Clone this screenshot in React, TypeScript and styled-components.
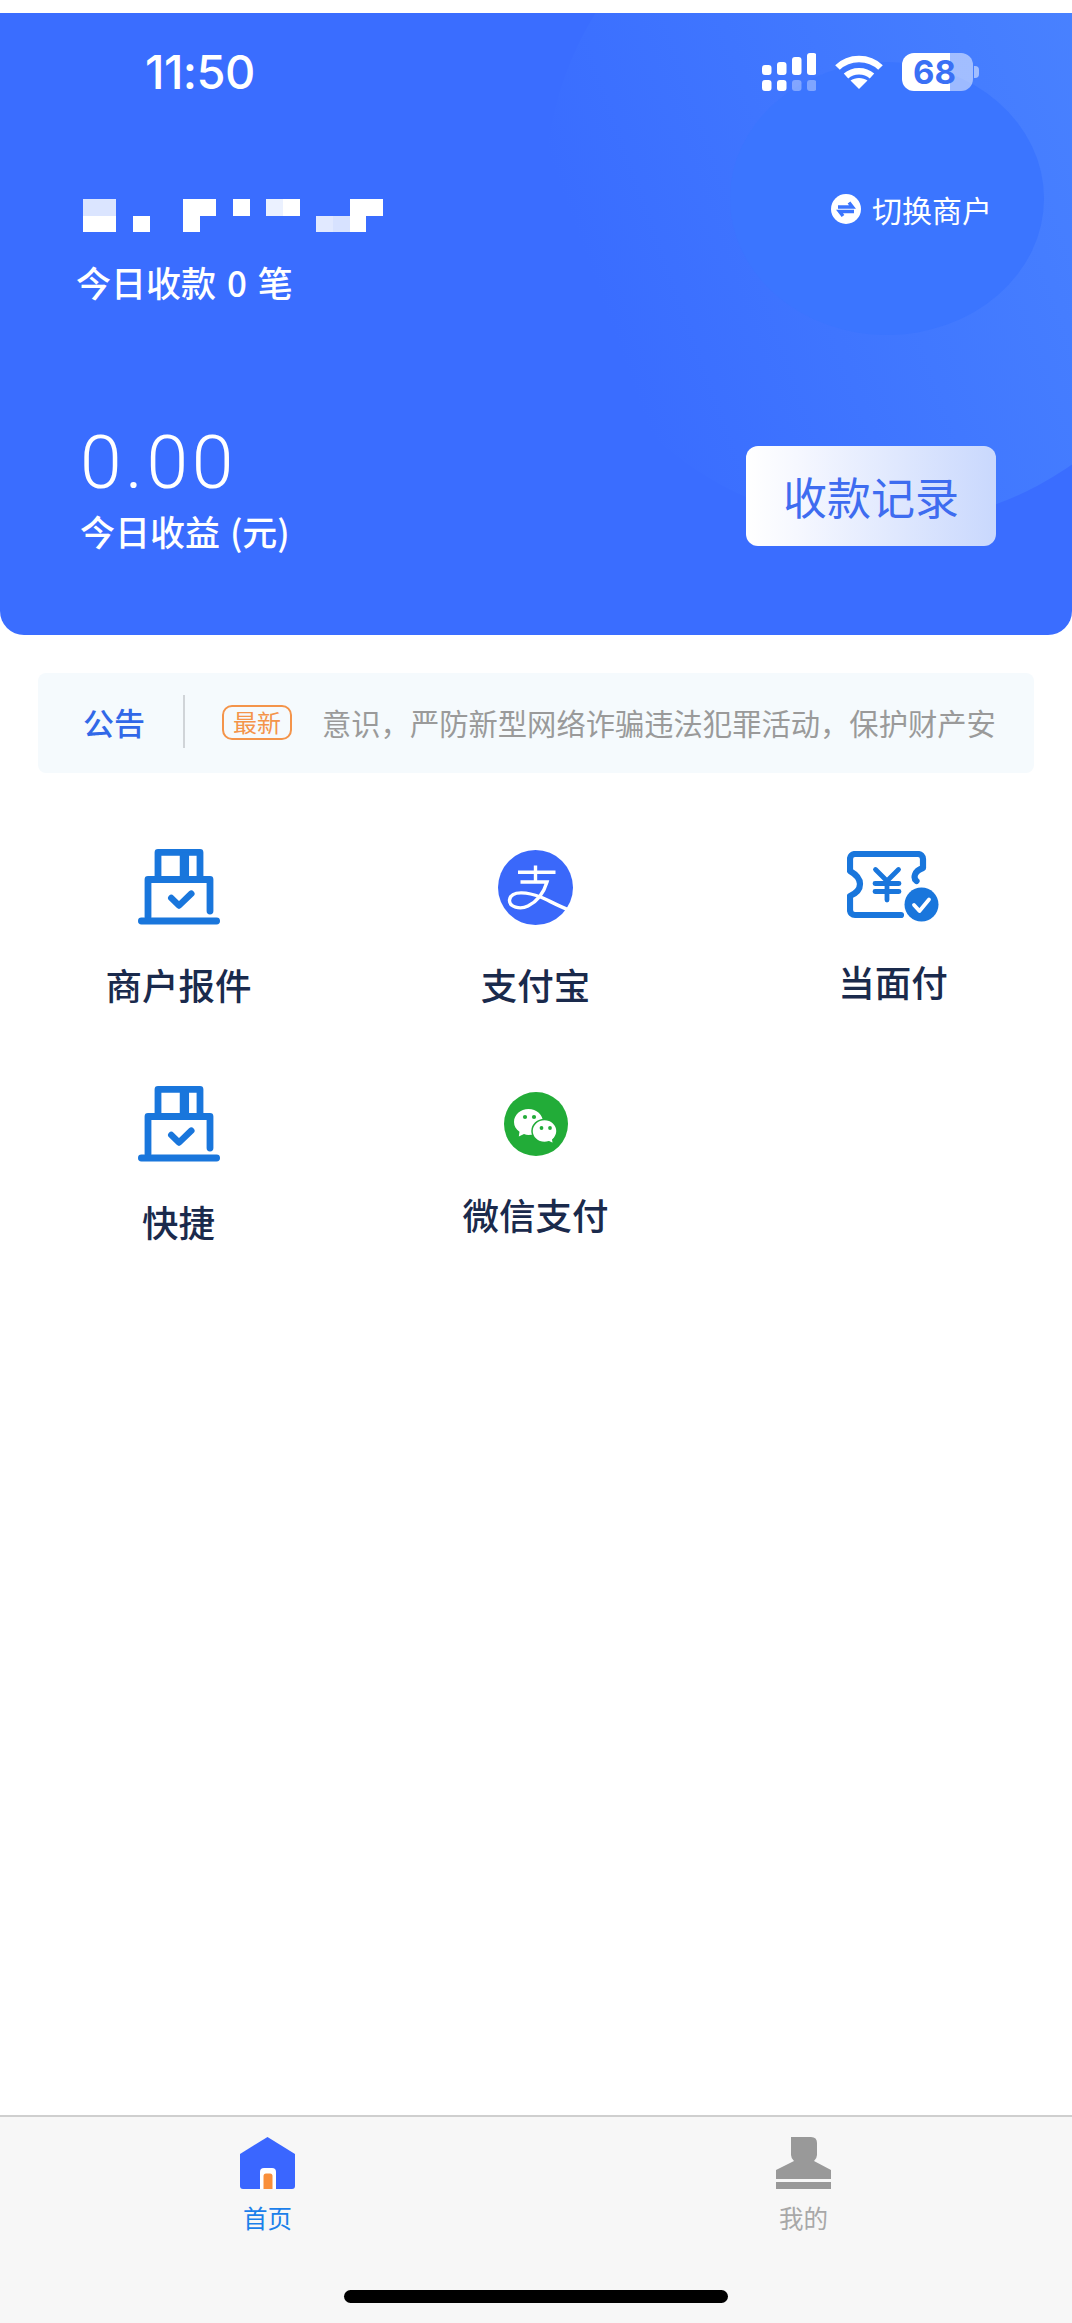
import React from 'react';
import styled, { createGlobalStyle } from 'styled-components';

const Global = createGlobalStyle`
  html, body { margin: 0; padding: 0; background: #fff; }
  * { box-sizing: border-box; }
  body { font-family: "Liberation Sans", "Noto Sans CJK SC", sans-serif; }
`;

const Page = styled.div`
  width: 1072px; height: 100vh; padding-top: 13px; display: flex; flex-direction: column; overflow: hidden; background: #fff;
`;
const Hero = styled.header`
  position: relative; height: 622px; flex: none; overflow: hidden;
  background: #3a6dff; border-radius: 0 0 24px 24px; color: #fff;
  display: flex; flex-direction: column;
`;
const GlowLarge = styled.div`
  position: absolute; left: 545px; top: -158px; width: 670px; height: 670px; border-radius: 50%;
  background: linear-gradient(70deg, rgba(70,128,255,0) 15%, rgba(70,128,255,.6) 50%, #4a83ff 85%);
`;
const GlowSmall = styled.div`
  position: absolute; left: 730px; top: 49px; width: 314px; height: 273px; border-radius: 50%;
  background: #3b75ff;
`;
const StatusBar = styled.div`
  position: relative; display: flex; justify-content: space-between; align-items: center;
  height: 38px; margin-top: 40px; padding: 0 99px 0 145px;
`;
const Time = styled.span`
  font: 500 47px/38px "Inter", "Liberation Sans", sans-serif; letter-spacing: -.6px;
`;
const StatusIcons = styled.div`
  display: flex; align-items: center; gap: 19px;
`;
const Battery = styled.div`
  position: relative; width: 71px; height: 38px; border-radius: 12px;
  background: linear-gradient(90deg, #fff 0 48px, rgba(255,255,255,.5) 48px);
  display: flex; align-items: center; justify-content: center;
  font: 700 33px/38px "Inter", sans-serif; color: #3a70f5; padding-right: 6px;
  &::after {
    content: ""; position: absolute; left: 72px; top: 13px; width: 5px; height: 12px;
    border-radius: 0 4px 4px 0; background: rgba(255,255,255,.5);
  }
`;
const MerchantRow = styled.div`
  position: relative; display: flex; justify-content: space-between; align-items: flex-start;
  margin-top: 108px; padding: 0 80px 0 76px;
`;
const MerchantInfo = styled.div`
  display: flex; flex-direction: column; align-items: flex-start;
`;
const Mosaic = styled.svg`
  display: block; margin-left: 7px;
`;
const TodayCount = styled.div`
  margin-top: 30px; font: 500 35px/40px "Noto Sans CJK SC", sans-serif; word-spacing: 3px;
`;
const SwitchBtn = styled.div`
  display: flex; align-items: center; gap: 11px; margin-top: -12px;
  font: 400 30px/44px "Noto Sans CJK SC", sans-serif;
`;
const RevenueRow = styled.div`
  position: relative; display: flex; justify-content: space-between; align-items: flex-start;
  margin-top: 118px; padding: 0 76px 0 80px;
`;
const RevenueInfo = styled.div`
  display: flex; flex-direction: column;
`;
const Amount = styled.div`
  font: 300 75px/84px "Roboto", "Liberation Sans", sans-serif; letter-spacing: 3.500px;
`;
const AmountLabel = styled.div`
  margin-top: 6px; font: 500 35px/42px "Noto Sans CJK SC", sans-serif; word-spacing: 2px;
`;
const RecordBtn = styled.div`
  width: 250px; height: 100px; margin-top: 26px; border-radius: 12px;
  background: linear-gradient(90deg, #fff 0%, #f6f8ff 20%, #c9d8fd 100%);
  display: flex; align-items: center; justify-content: center;
  font: 400 44px/50px "Noto Sans CJK SC", sans-serif; color: #3e6cf0;
`;
const Main = styled.main`
  flex: 1; display: flex; flex-direction: column; padding: 38px 38px 0;
`;
const Notice = styled.section`
  height: 100px; border-radius: 8px; background: #f5fafd; display: flex; align-items: center; overflow: hidden;
  padding-left: 45px;
`;
const NoticeTitle = styled.div`
  font: 500 31px/40px "Noto Sans CJK SC", sans-serif; color: #3168e8; width: 62px; flex: none; white-space: nowrap; margin-top: -3px;
`;
const NoticeDivider = styled.div`
  width: 2px; height: 53px; background: #d0d4d8; margin: -3px 38px 0; flex: none;
`;
const NoticeTag = styled.div`
  width: 70px; height: 35px; flex: none; border: 2px solid #f4944a; border-radius: 10px;
  display: flex; align-items: center; justify-content: center;
  font: 400 24px/30px "Noto Sans CJK SC", sans-serif; color: #f4944a; margin-top: -2px; margin-left: -1px;
`;
const NoticeText = styled.div`
  margin-left: 30px; flex: none; white-space: nowrap; margin-top: -2px;
  font: 400 29.300px/40px "Noto Sans CJK SC", sans-serif; color: #9a9a9a;
`;
const Grid = styled.nav`
  display: grid; grid-template-columns: 357px 357px 358px; margin: 76px -38px 0;
  grid-auto-rows: 237px;
`;
const Cell = styled.div`
  display: flex; flex-direction: column; align-items: center;
`;
const IconBox = styled.div`
  height: 76px; display: flex; align-items: center; justify-content: center; flex: none;
  svg { display: block; }
`;
const CellLabel = styled.div<{ $gap: number }>`
  margin-top: ${p => p.$gap}px; font: 500 36.500px/42px "Noto Sans CJK SC", sans-serif; color: #1a2a4c; white-space: nowrap;
`;
const TabBar = styled.footer`
  flex: none; height: 208px; border-top: 2px solid #cfcfcf; background: #f7f7f7; position: relative;
  display: grid; grid-template-columns: 535px 537px;
`;
const Tab = styled.div`
  display: flex; flex-direction: column; align-items: center; padding-top: 20px;
`;
const TabLabel = styled.div<{ $active?: boolean }>`
  margin-top: 13px; font: 400 24.500px/32px "Noto Sans CJK SC", sans-serif; color: ${p => p.$active ? '#1b80ea' : '#a8a8a8'};
`;
const HomeBar = styled.div`
  position: absolute; left: 344px; top: 173px; width: 384px; height: 13px; border-radius: 7px; background: #000;
`;

const SignalIcon = () => (
  <svg width="54" height="38" viewBox="0 0 54 38" fill="#fff">
    <rect x="0" y="12" width="9.500" height="10" rx="3" />
    <rect x="15" y="9" width="9.500" height="13" rx="3" />
    <rect x="30" y="4" width="9.500" height="18" rx="3" />
    <rect x="45" y="0" width="9.500" height="22" rx="3" />
    <rect x="0" y="27" width="9.500" height="11" rx="3" />
    <rect x="15" y="27" width="9.500" height="11" rx="3" />
    <rect x="30" y="27" width="9.500" height="11" rx="3" opacity=".35" />
    <rect x="45" y="27" width="9.500" height="11" rx="3" opacity=".35" />
  </svg>
);
const WifiIcon = () => (
  <svg width="48" height="34" viewBox="0 0 48 34" fill="none" stroke="#fff" strokeWidth="6.500">
    <path d="M2.500 12.500C14 1 34 1 45.500 12.500" />
    <path d="M11 21C18 14.500 30 14.500 37 21" />
    <path d="M24 34L15.500 25.500C20 22 28 22 32.500 25.500Z" fill="#fff" stroke="none" />
  </svg>
);
const SwitchIcon = () => (
  <svg width="30" height="30" viewBox="0 0 30 30">
    <circle cx="15" cy="15" r="15" fill="#fff" />
    <path d="M7 13H21.500L18 8.500M23 17.500H8.500L12 22" fill="none" stroke="#3b75ff" strokeWidth="3.400" />
  </svg>
);
const StoreIcon = () => (
  <svg width="82" height="76" viewBox="0 0 82 76" fill="none" stroke="#1976dc" strokeWidth="6.800" strokeLinecap="round" strokeLinejoin="round">
    <path d="M20 27V3.400H62V27" />
    <path d="M46.400 3.400V27" strokeWidth="9.300" strokeLinecap="butt" />
    <path d="M10 68V30.500H72V62" />
    <path d="M3.400 72H78.600" />
    <path d="M33.300 49L41 56.500L53.300 44.700" strokeWidth="6.500" />
  </svg>
);
const AlipayIcon = () => (
  <svg width="75" height="75" viewBox="0 0 75 75">
    <circle cx="37.500" cy="37.500" r="37.500" fill="#3a68fa" />
    <path d="M72 60.500C58 55 50 50 42.500 47C32 43 13 39 11.500 50C11 57 22 60 30 56C40 51 46 42 49 32H22.500M20 22.200H57.500M37.500 15.500V32" fill="none" stroke="#fff" strokeWidth="3.400" />
  </svg>
);
const TicketIcon = () => (
  <svg width="92" height="72" viewBox="0 0 92 72" fill="none" stroke="#1976dc" strokeWidth="6.200" strokeLinecap="round" strokeLinejoin="round">
    <path d="M69.500 30C66 27 67 20 76 17V8A5 5 0 0 0 71 3H8A5 5 0 0 0 3 8V20C10 24 13 28 13 33C13 38 10 42 3 45V59A5 5 0 0 0 8 64H54" />
    <path d="M28.500 18.500L40 30L51.500 18.500M28 32.500H52M28 40.500H52M40 30V49" strokeWidth="4.800" />
    <circle cx="74.500" cy="53.500" r="17" fill="#1976dc" stroke="none" />
    <path d="M67 54L72.500 60L82 48.500" stroke="#fff" strokeWidth="3.800" />
  </svg>
);
const WechatIcon = () => (
  <svg width="64" height="64" viewBox="0 0 64 64">
    <circle cx="32" cy="32" r="32" fill="#22ac38" />
    <path d="M24.500 17C16.500 17 10 22.800 10 30C10 34 12 37.500 15.500 39.800L14.800 44.500L20 42C21.500 42.600 23 43 24.500 43C32.500 43 39 37.200 39 30C39 22.800 32.500 17 24.500 17Z" fill="#fff" />
    <circle cx="21" cy="25" r="2.100" fill="#22ac38" />
    <circle cx="30" cy="25" r="2.100" fill="#22ac38" />
    <path d="M40.500 27.500C33.500 27.500 28 32.700 28 39C28 45.300 33.500 50.500 40.500 50.500C42 50.500 43.500 50.200 45 49.800L49.500 52L48.800 47.800C51 45.800 53 42.700 53 39C53 32.700 47.500 27.500 40.500 27.500Z" fill="#fff" stroke="#22ac38" strokeWidth="1.500" />
    <circle cx="37.500" cy="36" r="1.900" fill="#22ac38" />
    <circle cx="46" cy="36" r="1.900" fill="#22ac38" />
  </svg>
);
const HomeIcon = () => (
  <svg width="55" height="52" viewBox="0 0 55 52">
    <path d="M27.500 0L55 17V49A3 3 0 0 1 52 52H3A3 3 0 0 1 0 49V17Z" fill="#3a66ff" />
    <path d="M20 52V35A4 4 0 0 1 24 31H32A4 4 0 0 1 36 35V52Z" fill="#fff" />
    <path d="M23.500 52V39A2.500 2.500 0 0 1 26 36.500H30A2.500 2.500 0 0 1 32.500 39V52Z" fill="#f98f3a" />
  </svg>
);
const PersonIcon = () => (
  <svg width="55" height="52" viewBox="0 0 55 52" fill="#999">
    <path d="M15 0H35Q41 0 41 6V18Q41 21 38 24L55 33V42H0V33L18 24Q15 21 15 18Z" />
    <rect x="0" y="45" width="55" height="7" />
  </svg>
);

const blocks: [number, number, number, number, number][] = [
  [0, 0, 33, 17, 0.82], [0, 17, 33, 16, 1], [50, 17, 17, 16, 1],
  [100, 0, 33, 17, 1], [100, 17, 17, 16, 1], [150, 0, 17, 17, 1],
  [183, 0, 17, 17, 0.9], [200, 0, 17, 17, 1], [233, 17, 17, 16, 0.85],
  [250, 17, 17, 16, 0.8], [267, 17, 16, 16, 1], [267, 0, 33, 17, 1],
];

export default function App() {
  return (
    <Page>
      <Global />
      <Hero>
        <GlowLarge />
        <GlowSmall />
        <StatusBar>
          <Time>11:50</Time>
          <StatusIcons>
            <SignalIcon />
            <WifiIcon />
            <Battery>68</Battery>
          </StatusIcons>
        </StatusBar>
        <MerchantRow>
          <MerchantInfo>
            <Mosaic width="300" height="33" viewBox="0 0 300 33" fill="#fff">
              {blocks.map(([x, y, w, h, o], i) => <rect key={i} x={x} y={y} width={w} height={h} opacity={o} />)}
            </Mosaic>
            <TodayCount>今日收款 0 笔</TodayCount>
          </MerchantInfo>
          <SwitchBtn><SwitchIcon />切换商户</SwitchBtn>
        </MerchantRow>
        <RevenueRow>
          <RevenueInfo>
            <Amount>0.00</Amount>
            <AmountLabel>今日收益 (元)</AmountLabel>
          </RevenueInfo>
          <RecordBtn>收款记录</RecordBtn>
        </RevenueRow>
      </Hero>
      <Main>
        <Notice>
          <NoticeTitle>公告</NoticeTitle>
          <NoticeDivider />
          <NoticeTag>最新</NoticeTag>
          <NoticeText>意识，严防新型网络诈骗违法犯罪活动，保护财产安</NoticeText>
        </Notice>
        <Grid>
          <Cell><IconBox><StoreIcon /></IconBox><CellLabel $gap={39}>商户报件</CellLabel></Cell>
          <Cell><IconBox><AlipayIcon /></IconBox><CellLabel $gap={39}>支付宝</CellLabel></Cell>
          <Cell><IconBox><TicketIcon /></IconBox><CellLabel $gap={36}>当面付</CellLabel></Cell>
          <Cell><IconBox><StoreIcon /></IconBox><CellLabel $gap={39}>快捷</CellLabel></Cell>
          <Cell><IconBox><WechatIcon /></IconBox><CellLabel $gap={32}>微信支付</CellLabel></Cell>
        </Grid>
      </Main>
      <TabBar>
        <Tab><HomeIcon /><TabLabel $active>首页</TabLabel></Tab>
        <Tab><PersonIcon /><TabLabel>我的</TabLabel></Tab>
        <HomeBar />
      </TabBar>
    </Page>
  );
}
